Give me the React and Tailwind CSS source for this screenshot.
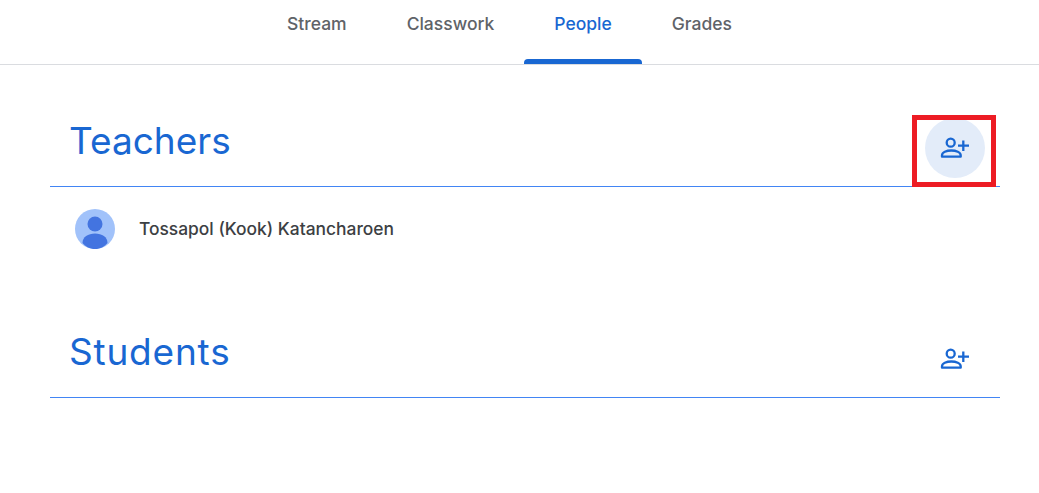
const font = { fontFamily: '"Inter", "Liberation Sans", sans-serif' };

function AddPersonIcon() {
  return (
    <svg width="30" height="24" viewBox="0 0 30 24" fill="none" className="text-[#1967d2]">
      <circle cx="10.700" cy="6.700" r="4" stroke="currentColor" strokeWidth="2.300" />
      <path d="M2 20.700v-1.500c0-3 4.500-4.700 9.300-4.700s9.400 1.700 9.400 4.700v1.500z" stroke="currentColor" strokeWidth="2.300" strokeLinejoin="round" />
      <path d="M18 9.700h11M23.300 4.500v10.500" stroke="currentColor" strokeWidth="2.300" />
    </svg>
  );
}

function Avatar() {
  return (
    <svg width="40" height="40" viewBox="0 0 40 40">
      <circle cx="20" cy="20" r="20" fill="#a1c2fa" />
      <circle cx="20" cy="15" r="7.500" fill="#4374e0" />
      <path d="M7.500 34c0-6 5.500-9.500 12.500-9.500S32.500 28 32.500 34c-3 3.700-7.500 6-12.500 6s-9.500-2.300-12.500-6z" fill="#4374e0" />
    </svg>
  );
}

function Tab({ label, active }) {
  return (
    <div className={`relative h-[64px] flex items-center px-[30px] pb-[16px] text-[17.500px] font-medium ${active ? 'text-[#1967d2]' : 'text-[#5f6368]'}`}>
      {label}
      {active && <div className="absolute bottom-0 left-0 right-0 h-[5px] bg-[#1967d2] rounded-t" />}
    </div>
  );
}

function SectionHead({ title, highlighted, titleClass, className }) {
  return (
    <div className={`relative flex items-center justify-between border-b border-[#4285f4] pl-[19px] pr-[15px] pb-[5px] h-[72px] ${className}`}>
      <h2 className={`text-[37px] leading-[44px] text-[#1967d2] -mt-[14px] ${titleClass}`}>{title}</h2>
      <div className={`w-[60px] h-[60px] rounded-full flex items-center justify-center ${highlighted ? 'bg-[#e3ecf9]' : ''}`}>
        <AddPersonIcon />
      </div>
      {highlighted && <div className="absolute top-0 right-[4px] w-[84px] h-[72px] border-[5px] border-[#ed1c24]" />}
    </div>
  );
}

export default function App() {
  return (
    <div className="w-[1039px] h-[493px] bg-white overflow-hidden" style={font}>
      <nav className="flex justify-center h-[65px] border-b border-[#dadce0] pr-5">
        <Tab label="Stream" />
        <Tab label="Classwork" />
        <Tab label="People" active />
        <Tab label="Grades" />
      </nav>
      <main className="ml-[50px] w-[950px]">
        <SectionHead title="Teachers" highlighted className="mt-[50px]" />
        <div className="flex items-center pl-[25px] mt-[22px] h-[40px]">
          <Avatar />
          <span className="ml-[24px] text-[17.400px] font-medium text-[#3c4043]">Tossapol (Kook) Katancharoen</span>
        </div>
        <SectionHead title="Students" titleClass="tracking-[0.800px]" className="mt-[77px]" />
      </main>
    </div>
  );
}
